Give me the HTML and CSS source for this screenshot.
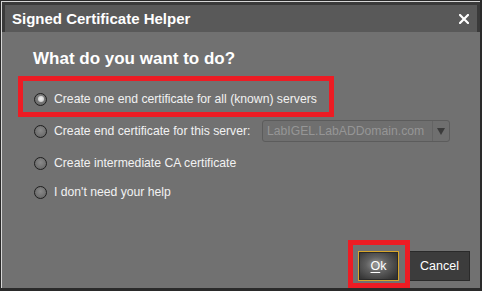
FILE: index.html
```html
<!DOCTYPE html>
<html>
<head>
<meta charset="utf-8">
<link rel="stylesheet" href="styles.css">
</head>
<body>
<div class="window">
  <div class="frame">
    <div class="titlewrap">
      <div class="titlebar">
        <span class="title">Signed Certificate Helper</span>
        <svg class="close" width="10" height="10" viewBox="0 0 10 10"><path d="M1 1L9 9M9 1L1 9" stroke="#fff" stroke-width="2.2" stroke-linecap="square"/></svg>
      </div>
    </div>
    <div class="content">
      <h1 class="heading">What do you want to do?</h1>
      <div class="options">
        <label class="row row-1"><span class="radio checked"></span><span class="label">Create one end certificate for all (known) servers</span></label>
        <label class="row row-2"><span class="radio"></span><span class="label label-server">Create end certificate for this server:</span>
          <span class="select"><span class="select-text">LabIGEL.LabADDomain.com</span><span class="select-arrow"><svg width="8" height="7" viewBox="0 0 8 7"><path d="M0 0H8L4 7Z" fill="#3b3b3b"/></svg></span></span>
        </label>
        <label class="row row-3"><span class="radio"></span><span class="label">Create intermediate CA certificate</span></label>
        <label class="row row-4"><span class="radio"></span><span class="label">I don't need your help</span></label>
      </div>
      <div class="buttons">
        <button class="btn btn-ok"><u>O</u>k</button>
        <button class="btn btn-cancel">Cancel</button>
      </div>
      <div class="mark mark-1"></div>
      <div class="mark mark-2"></div>
    </div>
  </div>
</div>
</body>
</html>
```

FILE: styles.css
```css
html, body {
  margin: 0;
  padding: 0;
  background: #262626;
}
body {
  width: 482px;
  height: 291px;
  overflow: hidden;
  font-family: "Liberation Sans", Arial, sans-serif;
}
.window {
  box-sizing: border-box;
  width: 482px;
  height: 291px;
  border-top: 1px solid #2a2a2a;
  border-left: 1px solid #2a2a2a;
  border-right: 2px solid #2a2a2a;
  border-bottom: 3px solid #2a2a2a;
}
.frame {
  height: 100%;
  box-sizing: border-box;
  border-top: 1px solid #d6d6d6;
  border-left: 1px solid #d6d6d6;
  display: flex;
  flex-direction: column;
}
.titlewrap {
  background: #3a3a3a;
  padding: 3px 3px 0 3px;
}
.titlebar {
  height: 27px;
  background: #595959;
  display: flex;
  align-items: center;
  justify-content: space-between;
  padding: 0 8px 0 7px;
}
.title {
  color: #ffffff;
  font-weight: bold;
  font-size: 15px;
  line-height: 18px;
  margin-top: 1px;
}
.close {
  display: block;
}
.content {
  flex: 1;
  background: #717171;
  position: relative;
  display: flex;
  flex-direction: column;
  padding: 16px 10px 7px 31px;
}
.heading {
  margin: 0;
  font-size: 17px;
  line-height: 22px;
  font-weight: bold;
  color: #ffffff;
}
.options {
  margin-top: 14px;
  display: flex;
  flex-direction: column;
}
.row {
  display: flex;
  align-items: center;
  font-size: 12.2px;
  color: #f2f2f2;
}
.row-1 { height: 30px; }
.row-2 { height: 34px; }
.row-3 { height: 30px; }
.row-4 { height: 29px; }
.radio {
  box-sizing: border-box;
  width: 13px;
  height: 13px;
  border-radius: 50%;
  border: 1px solid #1f1f1f;
  background: radial-gradient(circle at 50% 40%, #8a8a8a 0%, #6c6c6c 70%, #5a5a5a 100%);
  margin-left: 1px;
  margin-right: 7px;
  flex: none;
  position: relative;
}
.radio.checked::after {
  content: "";
  position: absolute;
  left: 2.5px;
  top: 2.5px;
  width: 6px;
  height: 6px;
  border-radius: 50%;
  background: radial-gradient(circle at 50% 45%, #f2f2f2 0%, #cfcfcf 70%, #a8a8a8 100%);
}
.label {
  line-height: 15px;
  white-space: nowrap;
}
.label-server {
  width: 208px;
  flex: none;
}
.select {
  box-sizing: border-box;
  width: 188px;
  height: 22px;
  border: 1px solid #5c5c5c;
  border-radius: 3px;
  background: #6f6f6f;
  display: flex;
  align-items: center;
}
.select-text {
  flex: 1;
  color: #969696;
  padding-left: 4px;
  font-size: 12.2px;
}
.select-arrow {
  width: 16px;
  height: 100%;
  border-left: 1px solid #646464;
  display: flex;
  align-items: center;
  justify-content: center;
}
.select-arrow svg { display: block; }
.buttons {
  margin-top: auto;
  display: flex;
  justify-content: flex-end;
  gap: 10px;
}
.btn {
  box-sizing: border-box;
  height: 30px;
  font-family: "Liberation Sans", Arial, sans-serif;
  font-size: 12.5px;
  color: #ffffff;
  padding: 0;
  margin: 0;
}
.btn-ok {
  width: 41px;
  border: 1px solid #d9a62a;
  background: radial-gradient(ellipse at 45% 45%, #9a9a9a 0%, #606060 35%, #363636 80%, #2c2c2c 100%);
  box-shadow: inset 0 0 0 1px #2a2a2a;
}
.btn-ok u {
  text-underline-offset: 2px;
}
.btn-cancel {
  width: 61px;
  border: 1px solid #2a2a2a;
  background: #3c3c3c;
}
.mark {
  position: absolute;
  box-sizing: border-box;
  border: 5px solid #ed1c24;
}
.mark-1 {
  left: 16px;
  top: 44px;
  width: 316px;
  height: 41px;
}
.mark-2 {
  left: 346px;
  top: 208px;
  width: 62px;
  height: 48px;
}
```
